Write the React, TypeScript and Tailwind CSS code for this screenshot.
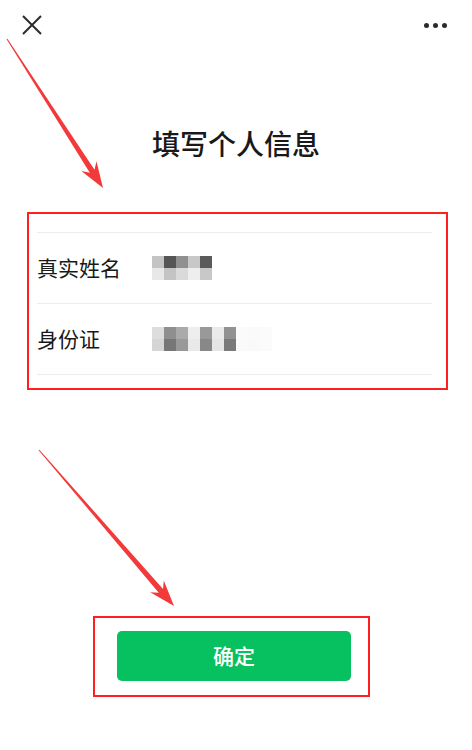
const arrow = (x1: number, y1: number, x2: number, y2: number) => {
  const len = Math.hypot(x2 - x1, y2 - y1);
  const dx = (x2 - x1) / len;
  const dy = (y2 - y1) / len;
  const nx = -dy;
  const ny = dx;
  const head = 26;
  const hx = x2 - dx * head;
  const hy = y2 - dy * head;
  const bx = x2 - dx * (head - 6);
  const by = y2 - dy * (head - 6);
  const pts = [
    [x1 + nx * 0.5, y1 + ny * 0.5],
    [bx + nx * 2.8, by + ny * 2.8],
    [hx + nx * 9, hy + ny * 9],
    [x2, y2],
    [hx - nx * 9, hy - ny * 9],
    [bx - nx * 2.8, by - ny * 2.8],
    [x1 - nx * 0.5, y1 - ny * 0.5],
  ];
  return pts.map((p) => p.join(',')).join(' ');
};

const nameCells = [
  ['#c4c4c4', '#555555', '#909090', '#c8c8c8', '#5a5a5a'],
  ['#e8e8e8', '#c4c4c4', '#dadada', '#eeeeee', '#c8c8c8'],
];

const idCells = [
  ['#dddddd', '#8f8f8f', '#aaaaaa', '#eeeeee', '#999999', '#eaeaea', '#929292', '#fbfbfb', '#fafafa', '#fbfbfb'],
  ['#d5d5d5', '#777777', '#999999', '#e9e9e9', '#888888', '#e5e5e5', '#7a7a7a', '#fafafa', '#f9f9f9', '#fbfbfb'],
];

const Mosaic = ({ cells }: { cells: string[][] }) => (
  <div className="flex flex-col">
    {cells.map((row, i) => (
      <div key={i} className="flex">
        {row.map((c, j) => (
          <div key={j} className="w-[12px] h-[12px]" style={{ backgroundColor: c }} />
        ))}
      </div>
    ))}
  </div>
);

const App = () => {
  return (
    <div
      className="relative w-[472px] h-[750px] overflow-hidden bg-white text-[#191919]"
      style={{ fontFamily: '"Noto Sans CJK SC", "Noto Sans", sans-serif' }}
    >
      {/* Top bar */}
      <div className="flex justify-between items-start pl-[22px] pr-[25px] pt-[15px]">
        <svg width="20" height="20" viewBox="0 0 20 20" fill="none" stroke="#2b2b2b" strokeWidth="2">
          <path d="M1 1 L19 19 M19 1 L1 19" />
        </svg>
        <div className="flex gap-[4px] pt-[8px]">
          <span className="w-[5px] h-[5px] rounded-full bg-[#2b2b2b]" />
          <span className="w-[5px] h-[5px] rounded-full bg-[#2b2b2b]" />
          <span className="w-[5px] h-[5px] rounded-full bg-[#2b2b2b]" />
        </div>
      </div>

      {/* Title */}
      <h1 className="mt-[91px] text-center text-[28px] leading-[34px] font-medium">填写个人信息</h1>

      {/* Form */}
      <div className="mt-[52px] ml-[27px] mr-[24px] border-2 border-[#ff1f1f] pl-[8px] pr-[14px] pt-[18px] pb-[13px]">
        <div className="border-t border-[#ececec] h-[71px] flex items-center">
          <span className="w-[115px] text-[21px]">真实姓名</span>
          <Mosaic cells={nameCells} />
        </div>
        <div className="border-t border-b border-[#ececec] h-[72px] flex items-center">
          <span className="w-[115px] text-[21px]">身份证</span>
          <Mosaic cells={idCells} />
        </div>
      </div>

      {/* Button */}
      <div className="mt-[226px] ml-[93px] w-[277px] border-2 border-[#ff1f1f] pl-[22px] pr-[17px] pt-[13px] pb-[14px]">
        <button className="w-[234px] h-[50px] rounded-[5px] bg-[#07c160] text-white text-[21px] font-medium">
          确定
        </button>
      </div>

      {/* Annotation arrows */}
      <svg className="absolute inset-0 pointer-events-none" width="472" height="750">
        <polygon points={arrow(7, 39, 103, 188)} fill="#f23a3a" />
        <polygon points={arrow(39, 450, 174, 606)} fill="#f23a3a" />
      </svg>
    </div>
  );
};

export default App;
